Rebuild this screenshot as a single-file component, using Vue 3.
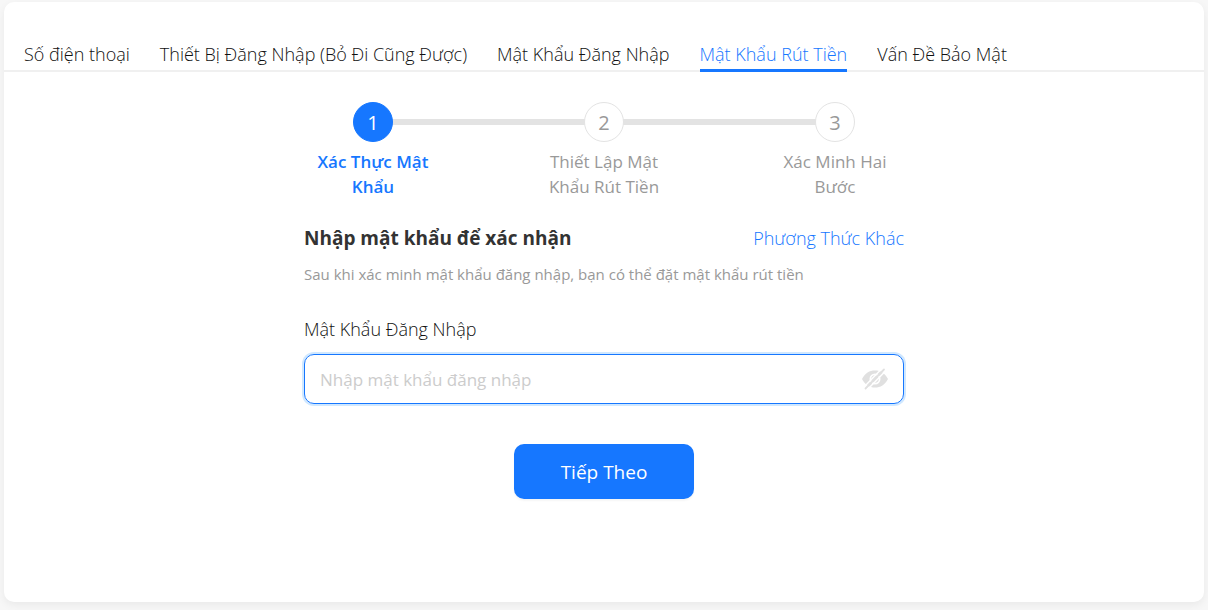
<template>
  <main class="security-page">
    <section class="security-card">
      <nav class="tabs">
        <a
          v-for="tab in tabs"
          :key="tab.id"
          :href="'#' + tab.id"
          class="tab"
          :class="{ active: tab.id === activeTab }"
          @click.prevent="activeTab = tab.id"
        >{{ tab.label }}</a>
      </nav>

      <div class="content">
        <ol class="steps">
          <li
            v-for="(step, index) in steps"
            :key="step"
            class="step"
            :class="{ current: index + 1 === currentStep }"
          >
            <span class="step-number">{{ index + 1 }}</span>
            <span class="step-title">{{ step }}</span>
          </li>
        </ol>

        <div class="heading">
          <h2>Nhập mật khẩu để xác nhận</h2>
          <a href="#other" class="other-method">Phương Thức Khác</a>
        </div>
        <p class="hint">Sau khi xác minh mật khẩu đăng nhập, bạn có thể đặt mật khẩu rút tiền</p>

        <form @submit.prevent="nextStep">
          <label for="password">Mật Khẩu Đăng Nhập</label>
          <div class="input-box">
            <input
              id="password"
              v-model="password"
              :type="showPassword ? 'text' : 'password'"
              placeholder="Nhập mật khẩu đăng nhập"
            />
            <button
              type="button"
              class="eye-btn"
              aria-label="Hiện mật khẩu"
              @click="showPassword = !showPassword"
            >
              <svg width="26" height="22" viewBox="0 0 26 22">
                <path
                  fill="#e0e0e0"
                  fill-rule="evenodd"
                  d="M0 11C3 5 7.500 2.500 13 2.500S23 5 26 11C23 17 18.500 19.500 13 19.500S3 17 0 11ZM13 5.500A5.500 5.500 0 1 0 13 16.500A5.500 5.500 0 1 0 13 5.500Z"
                />
                <circle cx="13" cy="11" r="3.800" fill="#e0e0e0" />
                <path d="M2 19L20.500 0" stroke="#fff" stroke-width="1.500" />
                <path d="M3.500 20.500L22 1.500" stroke="#e0e0e0" stroke-width="1.800" stroke-linecap="round" />
                <path d="M5 22L23.500 3" stroke="#fff" stroke-width="1.500" />
              </svg>
            </button>
          </div>
          <button type="submit" class="next-btn">Tiếp Theo</button>
        </form>
      </div>
    </section>
  </main>
</template>

<script setup>
import { ref } from 'vue';

const tabs = [
  { id: 'phone', label: 'Số điện thoại' },
  { id: 'device', label: 'Thiết Bị Đăng Nhập (Bỏ Đi Cũng Được)' },
  { id: 'login-password', label: 'Mật Khẩu Đăng Nhập' },
  { id: 'withdraw-password', label: 'Mật Khẩu Rút Tiền' },
  { id: 'question', label: 'Vấn Đề Bảo Mật' },
];
const steps = ['Xác Thực Mật Khẩu', 'Thiết Lập Mật Khẩu Rút Tiền', 'Xác Minh Hai Bước'];

const activeTab = ref('withdraw-password');
const currentStep = ref(1);
const password = ref('');
const showPassword = ref(false);

const nextStep = () => {
  if (password.value && currentStep.value < steps.length) {
    currentStep.value++;
  }
};
</script>

<style>
body {
  margin: 0;
  background-color: #f7f7f7;
}
</style>

<style scoped>
.security-page {
  box-sizing: border-box;
  display: flex;
  min-height: 100vh;
  padding: 2px 4px 8px;
  color: #111;
  font-family: "Segoe UI", "Open Sans", "Noto Sans", sans-serif;
  font-size: 18px;
  font-weight: 300;
  line-height: 25px;
}

.security-card {
  flex: 1;
  min-width: 0;
  background-color: #fff;
  border-radius: 10px;
  box-shadow: 0 3px 9px rgba(0, 0, 0, 0.06);
}

.tabs {
  display: flex;
  gap: 30px;
  padding: 40px 20px 0;
  border-bottom: 2px solid #f0f0f0;
}

.tab {
  margin-bottom: -2px;
  padding-bottom: 2px;
  border-bottom: 3px solid transparent;
  color: #111;
  text-decoration: none;
  white-space: nowrap;
}

.tab.active {
  color: #1677ff;
  border-color: #1677ff;
}

.content {
  max-width: 600px;
  margin: 0 auto;
  padding: 30px 0 40px;
}

.steps {
  display: flex;
  justify-content: space-between;
  margin: 0;
  padding: 0;
  list-style: none;
}

.step {
  position: relative;
  display: flex;
  flex-direction: column;
  align-items: center;
  gap: 7px;
  width: 23%;
  color: #999;
  font-size: 17px;
  font-weight: 400;
  text-align: center;
}

/* connector to the next step */
.step:not(:last-child)::after {
  content: "";
  position: absolute;
  top: 17px;
  left: 50%;
  width: 168%;
  height: 6px;
  background-color: #e3e3e3;
}

.step-number {
  position: relative;
  z-index: 1;
  box-sizing: border-box;
  width: 40px;
  height: 40px;
  border: 1px solid #e3e3e3;
  border-radius: 50%;
  background-color: #fff;
  font-size: 20px;
  line-height: 40px;
}

.step-title {
  max-width: 120px;
}

.current .step-number {
  border-color: #1677ff;
  background-color: #1677ff;
  color: #fff;
}

.current .step-title {
  color: #1677ff;
  font-weight: 600;
}

.heading {
  display: flex;
  justify-content: space-between;
  align-items: center;
  margin-top: 26px;
}

h2 {
  margin: 0;
  color: #333;
  font-size: 19px;
  font-weight: 700;
  line-height: 26px;
}

.other-method {
  color: #1677ff;
  text-decoration: none;
}

.hint {
  margin: 11px 0 30px;
  color: #999;
  font-size: 15px;
  font-weight: 400;
}

label {
  display: block;
  margin-bottom: 12px;
}

.input-box {
  display: flex;
  align-items: center;
  padding: 0 15px;
  border: 1px solid #1677ff;
  border-radius: 10px;
  box-shadow: 0 0 0 2px #d0e8ff;
}

input {
  flex: 1;
  min-width: 0;
  height: 48px;
  padding: 0;
  border: none;
  outline: none;
  background: none;
  color: #333;
  font: inherit;
  font-size: 17px;
  font-weight: 400;
}

input::placeholder {
  color: #ccc;
}

.eye-btn {
  display: flex;
  padding: 0;
  border: none;
  background: none;
  cursor: pointer;
}

.next-btn {
  display: block;
  width: 180px;
  height: 55px;
  margin: 40px auto 0;
  border: none;
  border-radius: 10px;
  background-color: #1677ff;
  box-shadow: 0 2px 2px rgba(0, 0, 0, 0.04);
  color: #fff;
  font-family: inherit;
  font-size: 19px;
  cursor: pointer;
}
</style>
